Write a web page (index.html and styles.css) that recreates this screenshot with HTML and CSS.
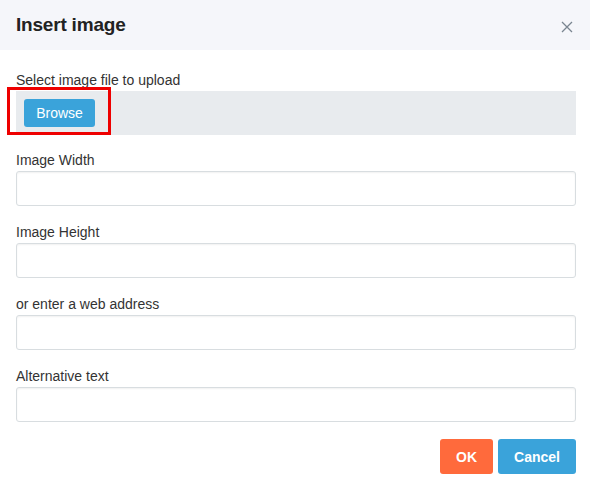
FILE: index.html
```html
<!DOCTYPE html>
<html lang="en">
<head>
  <meta charset="UTF-8">
  <meta name="viewport" content="width=device-width, initial-scale=1.0">
  <title>Insert image</title>
  <link rel="stylesheet" href="styles.css">
</head>
<body>

<div class="dialog">
  <div class="dialog-header">
    <h2>Insert image</h2>
    <button class="close" aria-label="Close">
      <svg width="12" height="12" viewBox="0 0 12 12">
        <path d="M1 1L11 11M11 1L1 11" stroke="#7a8590" stroke-width="1.3" fill="none"/>
      </svg>
    </button>
  </div>

  <div class="dialog-body">
    <label>Select image file to upload</label>
    <div class="upload-box">
      <button class="btn btn-blue btn-browse">Browse</button>
      <!-- red outline marking the upload button -->
      <span class="highlight"></span>
    </div>

    <label for="imgWidth">Image Width</label>
    <input type="text" id="imgWidth">

    <label for="imgHeight">Image Height</label>
    <input type="text" id="imgHeight">

    <label for="imgUrl">or enter a web address</label>
    <input type="text" id="imgUrl">

    <label for="imgAlt">Alternative text</label>
    <input type="text" id="imgAlt">

    <div class="dialog-footer">
      <button class="btn btn-orange">OK</button>
      <button class="btn btn-blue">Cancel</button>
    </div>
  </div>
</div>

</body>
</html>
```

FILE: styles.css
```css
body {
  margin: 0;
  font-family: "Liberation Sans", Arial, sans-serif;
  background: #ffffff;
  color: #333;
}
.dialog {
  width: 590px;
}
.dialog-header {
  height: 50px;
  background: #f5f6fa;
  display: flex;
  align-items: center;
  justify-content: space-between;
  padding: 0 16px;
}
.dialog-header h2 {
  margin: 0;
  font-size: 19px;
  font-weight: bold;
  color: #222;
  letter-spacing: -0.2px;
}
.close {
  border: 0;
  background: none;
  padding: 0;
  margin-right: 1px;
  margin-top: 3px;
  display: flex;
}
.dialog-body {
  padding: 21px 14px 0 16px;
}
label {
  display: block;
  font-size: 14px;
  line-height: 19px;
  color: #333;
  margin-bottom: 1px;
}
input[type="text"] {
  display: block;
  box-sizing: border-box;
  width: 100%;
  height: 35px;
  margin: 0 0 17px;
  border: 1px solid #d8dde0;
  border-radius: 3px;
  box-shadow: inset 0 1px 2px rgba(0, 0, 0, 0.06);
  font-size: 14px;
}
.upload-box {
  position: relative;
  height: 44px;
  background: #e8ebee;
  display: flex;
  align-items: center;
  margin-bottom: 16px;
}
.highlight {
  position: absolute;
  left: -9px;
  top: -4px;
  width: 98px;
  height: 42px;
  border: 3px solid #ee0000;
}
.btn {
  border: 0;
  border-radius: 3px;
  color: #fff;
  font-family: inherit;
  font-size: 14px;
  cursor: pointer;
}
.btn-blue {
  background: #3aa3da;
}
.btn-orange {
  background: #ff6a3c;
}
.btn-browse {
  display: block;
  width: 71px;
  height: 28px;
  margin-left: 8px;
}
.dialog-footer {
  display: flex;
  justify-content: flex-end;
  gap: 5px;
}
.dialog-footer .btn {
  height: 35px;
  font-weight: bold;
  padding: 0 16px;
}
```
